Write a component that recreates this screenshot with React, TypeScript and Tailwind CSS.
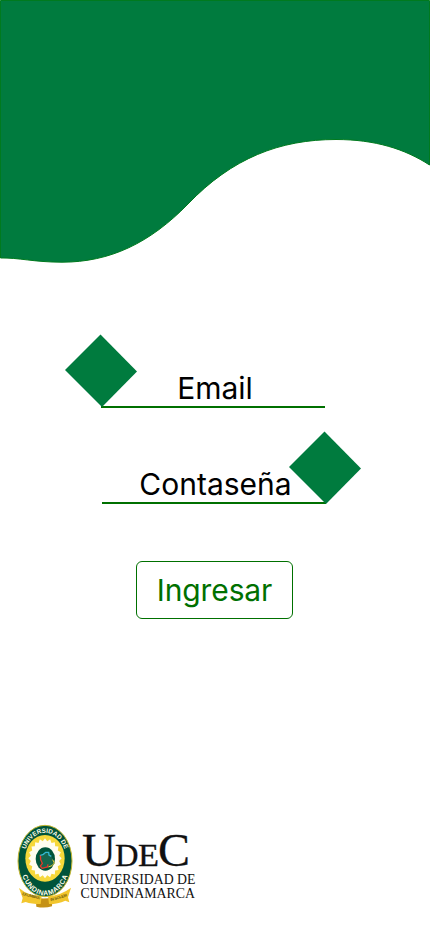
function Wave() {
  return (
    <svg className="block h-[264px] w-full" viewBox="0 0 430 264">
      <path
        d="M0.5 0.5H429.5V165C405 149 375 139.5 336 139.5C280 139.5 232 158 188 204C150 243 110 262.2 62 262.2C34 262.2 18 257.5 0.5 258Z"
        fill="#007b3e"
        stroke="#007a1e"
      />
    </svg>
  );
}

function Seal() {
  const teeth = Array.from({ length: 40 }, (_, i) => {
    const a = (i * Math.PI) / 20;
    const k = i % 2 ? 0.86 : 1;
    return `${(105 + 50 * k * Math.cos(a)).toFixed(1)},${(130 + 60 * k * Math.sin(a)).toFixed(1)}`;
  }).join(" ");
  return (
    <svg className="h-[100px] w-[70px] overflow-visible" viewBox="0 0 210 300">
      <defs>
        <path id="upper" d="M48 99A64 84 0 0 1 162 99" />
        <path id="lower" d="M35 175A74 98 0 0 0 175 175" />
      </defs>
      <ellipse cx="105" cy="138" rx="81" ry="107" fill="#00543a" stroke="#c5b832" strokeWidth="3" />
      <ellipse cx="105" cy="130" rx="59" ry="70" fill="#f6d83a" />
      <polygon points={teeth} fill="#fffdf0" />
      <ellipse cx="106" cy="132" rx="29" ry="35" fill="#00543a" />
      <path
        d="M90 130L91 121L100 118L107 112L116 112L117 119L124 124L129 133L134 145L126 153L114 157L96 161L92 154L97 147Z"
        fill="#17664d"
      />
      <path d="M91 120L92 134L97 145L91 153L96 160" fill="none" stroke="#e5392b" strokeWidth="4" />
      <path d="M91 121L100 118L107 112L116 112L117 120L124 124" fill="none" stroke="#35b7d2" strokeWidth="4" />
      <path d="M96 160L112 156L114 148" fill="none" stroke="#e5342d" strokeWidth="4" />
      <path d="M115 156L126 152L133 144L128 134" fill="none" stroke="#e6cc32" strokeWidth="3" />
      <g fill="#fffde9" fontFamily="Liberation Sans, sans-serif" fontWeight="700">
        <text fontSize="19">
          <textPath href="#upper" startOffset="50%" textAnchor="middle" textLength="163">UNIVERSIDAD DE</textPath>
        </text>
        <text fontSize="21">
          <textPath href="#lower" startOffset="50%" textAnchor="middle" textLength="192">CUNDINAMARCA</textPath>
        </text>
      </g>
      <path d="M77 247Q103 255 128 246L126 274Q103 281 79 275Z" fill="#c59115" />
      <path d="M27 219Q55 243 95 243L92 267Q64 267 47 261L34 265L38 249Z" fill="#f2c62d" />
      <path d="M183 218Q152 242 114 243L117 267Q144 267 166 257L178 262L174 247Z" fill="#f2c62d" />
      <g fill="#74600c" fontFamily="Liberation Sans, sans-serif" fontWeight="700" fontSize="12">
        <text transform="translate(36 240) rotate(14)" textLength="54">EX UMBRA</text>
        <text transform="translate(122 259) rotate(-17)" textLength="52">IN SOLEM</text>
      </g>
    </svg>
  );
}

function Wordmark() {
  return (
    <svg className="h-[100px] w-[140px]" viewBox="0 0 140 100">
      <g fill="#111" fontFamily="Liberation Serif, serif">
        <g stroke="#111" strokeWidth="0.3">
          <text x="12" y="50.5" fontSize="46" textLength="34" lengthAdjust="spacingAndGlyphs">U</text>
          <text x="45" y="50.5" fontSize="32" textLength="23.5" lengthAdjust="spacingAndGlyphs">D</text>
          <text x="68" y="50.5" fontSize="32" textLength="21" lengthAdjust="spacingAndGlyphs">E</text>
          <text x="88" y="50.5" fontSize="46" textLength="32" lengthAdjust="spacingAndGlyphs">C</text>
        </g>
        <text x="9.5" y="69" fontSize="14" textLength="116" lengthAdjust="spacingAndGlyphs">UNIVERSIDAD DE</text>
        <text x="10.5" y="82.5" fontSize="14" textLength="114.5" lengthAdjust="spacingAndGlyphs">CUNDINAMARCA</text>
      </g>
    </svg>
  );
}

function Diamond({ className }: { className: string }) {
  return (
    <svg className={`absolute h-[74px] w-[74px] ${className}`} viewBox="0 0 74 74">
      <polygon points="36.5,0.5 73,37.5 38,73 1,36" fill="#007b3e" />
    </svg>
  );
}

export default function App() {
  return (
    <main className="flex h-[932px] w-[430px] flex-col overflow-hidden bg-white font-['Inter',sans-serif] text-[30px] leading-9">
      <Wave />
      <form className="flex flex-col items-center pt-[106px]">
        <div className="relative mr-1 flex h-[38px] w-[224px] justify-center border-b-2 border-[#007000]">
          <label className="ml-1">Email</label>
          <Diamond className="-left-[37px] -top-9" />
        </div>
        <div className="relative mr-0.5 mt-[58px] flex h-[38px] w-[224px] justify-center border-b-2 border-[#007000]">
          <label className="ml-[3px]">Contaseña</label>
          <Diamond className="left-[186px] -top-[35px]" />
        </div>
        <button
          type="button"
          className="mr-px mt-[57px] flex h-[58px] w-[157px] items-center justify-center rounded-md border border-[#007000] tracking-[-0.1px] text-[#007000]"
        >
          Ingresar
        </button>
      </form>
      <footer className="mb-[17px] ml-[10px] mt-auto flex">
        <Seal />
        <div className="-ml-[10px]">
          <Wordmark />
        </div>
      </footer>
    </main>
  );
}
